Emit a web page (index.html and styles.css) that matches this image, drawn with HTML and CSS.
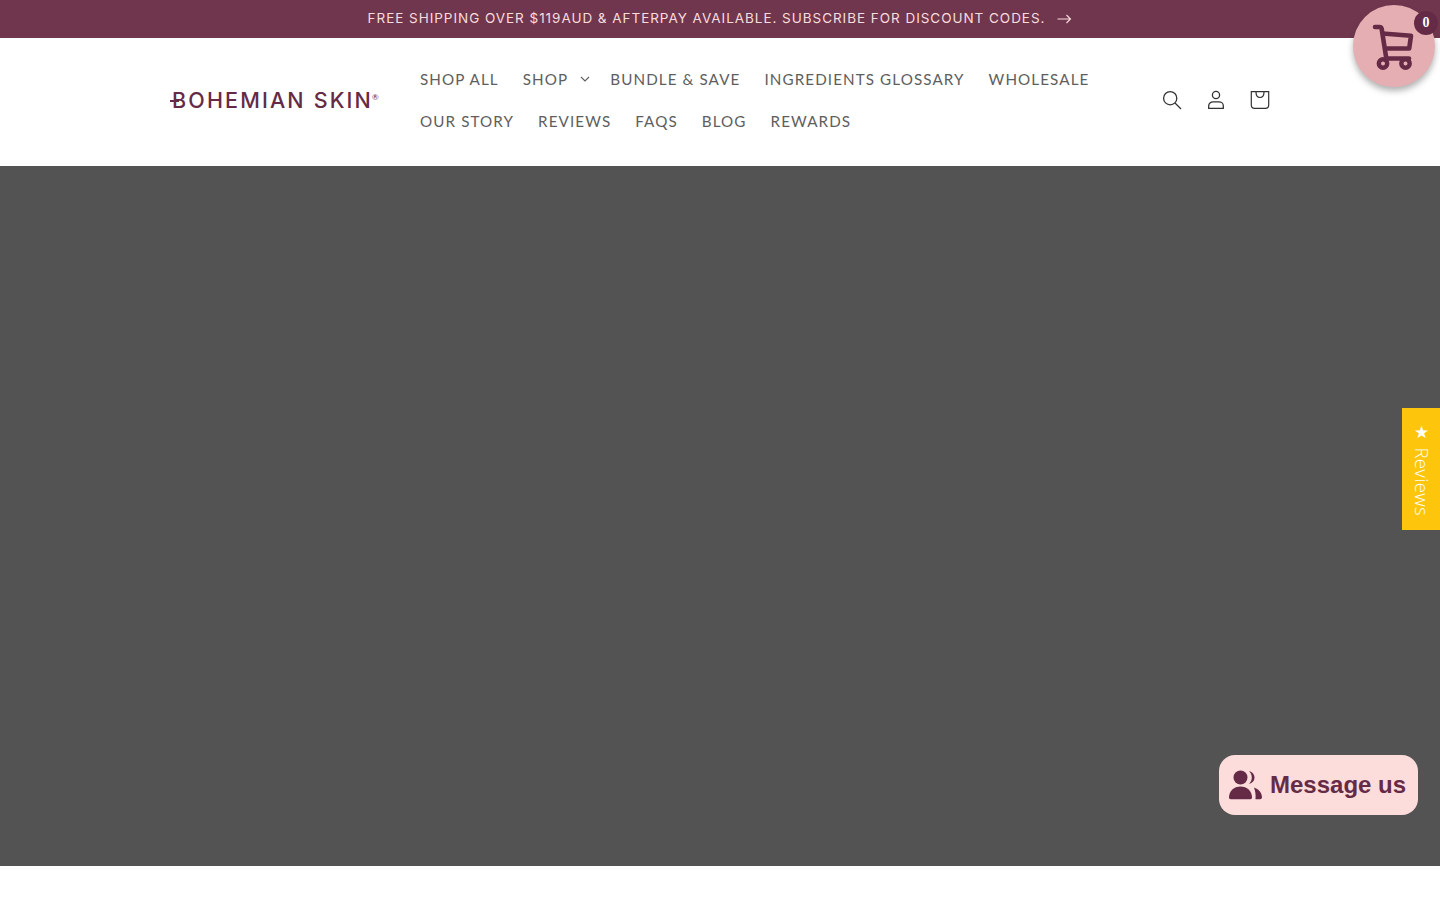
FILE: index.html
```html
<!DOCTYPE html>
<html lang="en">
<head>
<meta charset="utf-8">
<title>Bohemian Skin</title>
<link rel="stylesheet" href="styles.css">
</head>
<body>
<div class="announce">
  <a class="announce-link" href="#"><span>FREE SHIPPING OVER $119AUD &amp; AFTERPAY AVAILABLE. SUBSCRIBE FOR DISCOUNT CODES.</span>
  <svg class="arrow" viewBox="0 0 14 10" width="15" height="10"><path d="M0 5h13M9 1l4 4-4 4" fill="none" stroke="currentColor" stroke-width="1.1"/></svg></a>
</div>
<header class="header">
  <a class="logo" href="#"><span class="logo-text">BOHEMIAN SKIN</span><sup class="logo-reg">®</sup></a>
  <nav class="nav">
    <a href="#">SHOP ALL</a>
    <a href="#" class="has-caret">SHOP<svg class="caret" viewBox="0 0 10 6" width="10" height="6"><path d="M1 1l4 4 4-4" fill="none" stroke="currentColor" stroke-width="1.1"/></svg></a>
    <a href="#">BUNDLE &amp; SAVE</a>
    <a href="#">INGREDIENTS GLOSSARY</a>
    <a href="#">WHOLESALE</a>
    <span class="nav-break"></span>
    <a href="#">OUR STORY</a>
    <a href="#">REVIEWS</a>
    <a href="#">FAQS</a>
    <a href="#">BLOG</a>
    <a href="#">REWARDS</a>
  </nav>
  <div class="icons">
    <a class="icon" href="#" aria-label="Search"><svg viewBox="0 0 20 20" width="20" height="20"><circle cx="8.200" cy="8.200" r="6.600" fill="none" stroke="currentColor" stroke-width="1.300"/><path d="M13 13l6 6" stroke="currentColor" stroke-width="1.300"/></svg></a>
    <a class="icon" href="#" aria-label="Log in"><svg viewBox="0 0 20 20" width="20" height="20"><circle cx="10" cy="5" r="3.600" fill="none" stroke="currentColor" stroke-width="1.300"/><path d="M2.700 18.300v-2.600c0-2.300 2-3.900 4.300-3.900h6c2.300 0 4.300 1.600 4.300 3.900v2.600z" fill="none" stroke="currentColor" stroke-width="1.300"/></svg></a>
    <a class="icon" href="#" aria-label="Cart"><svg viewBox="0 0 20 20" width="20" height="20"><path d="M1.300 1.700h17.400v13.300c0 1.900-1.500 3.300-3.300 3.300H4.600c-1.800 0-3.300-1.400-3.300-3.300z" fill="none" stroke="currentColor" stroke-width="1.200"/><path d="M6 2c0 3.500 1.600 5.500 4 5.500s4-2 4-5.500" fill="none" stroke="currentColor" stroke-width="1.200"/></svg></a>
  </div>
</header>
<main class="hero"></main>
<div class="foot"></div>

<a class="float-cart" href="#" aria-label="Cart">
  <svg viewBox="0 0 42 46" width="42" height="46"><path d="M3 3h4.500c1.300 0 2 .8 2.200 2l4.300 27.500c.2 1.200 1 2 2.200 2h20.800" fill="none" stroke="#652b46" stroke-width="4.600" stroke-linecap="round" stroke-linejoin="round"/><path d="M10.500 9.500l28.500 2.200-1.800 12.800H12.500" fill="none" stroke="#652b46" stroke-width="4.600" stroke-linejoin="round"/><circle cx="11" cy="39.500" r="4.200" fill="none" stroke="#652b46" stroke-width="4.400"/><circle cx="33.500" cy="39.500" r="4.200" fill="none" stroke="#652b46" stroke-width="4.400"/></svg>
  <span class="float-badge">0</span>
</a>

<a class="reviews-tab" href="#"><span class="reviews-text"><span class="star">★</span> Reviews</span></a>

<a class="chat" href="#">
  <svg viewBox="0 0 34 30" width="34" height="30"><circle cx="11.500" cy="7.500" r="7" fill="#652b46"/><path d="M0 27.500C0 21 5 16.500 11.500 16.500S23 21 23 27.500c0 1-.7 1.700-1.700 1.700H1.700C.7 29.200 0 28.500 0 27.500z" fill="#652b46"/><path d="M20 1.200c3.500.6 5.500 3.300 5.500 6.300s-2 5.700-5.500 6.300c1.800-1.600 2.800-3.800 2.800-6.300S21.800 2.800 20 1.200zM25 17.500c4.500 1.500 8 5.300 8 9.800 0 1.100-.7 1.900-1.800 1.900h-4.700c.4-4.500-.2-8.300-1.500-11.700z" fill="#652b46"/></svg>
  <span>Message us</span>
</a>
</body>
</html>
```
FILE: styles.css
```css
* { box-sizing: border-box; }
html, body { margin: 0; padding: 0; }
body {
  height: 900px;
  overflow: hidden;
  background: #fff;
  font-family: "Lato", "Liberation Sans", sans-serif;
}
a { color: inherit; text-decoration: none; }

.announce {
  height: 38px;
  padding-bottom: 1px;
  background: #70364e;
  color: #f8dcdc;
  display: flex;
  align-items: center;
  justify-content: center;
}
.announce-link {
  display: flex;
  align-items: center;
  gap: 12px;
  font-family: "Inter", "Liberation Sans", sans-serif;
  font-size: 13.500px;
  letter-spacing: 0.960px;
  font-weight: 400;
  line-height: 1;
}
.arrow { flex: none; }

.header {
  height: 128px;
  padding: 20px 158px 24px 170px;
  display: flex;
  align-items: center;
  background: #fff;
}
.logo {
  width: 238px;
  flex: none;
  display: flex;
  align-items: flex-start;
  color: #652b46;
}
.logo-text {
  position: relative;
  padding-left: 2px;
  font-family: "Inter", "Liberation Sans", sans-serif;
  font-size: 21.500px;
  line-height: 24px;
  letter-spacing: 2.150px;
  font-weight: 500;
  white-space: nowrap;
}
.logo-text::before {
  content: "";
  position: absolute;
  left: 0;
  width: 9px;
  top: 12px;
  height: 1.500px;
  background: #652b46;
}
.logo-reg {
  font-size: 8px;
  line-height: 1;
  margin-top: 5px;
  margin-left: -1px;
}

.nav {
  flex: 1;
  display: flex;
  flex-wrap: wrap;
  align-items: center;
  color: #5e5e5e;
  font-size: 15.200px;
  letter-spacing: 1.100px;
}
.nav a {
  display: flex;
  align-items: center;
  height: 42px;
  padding: 0 12px;
  white-space: nowrap;
}
.nav .has-caret { padding-right: 8px; }
.caret { margin-left: 12px; }
.nav-break { flex-basis: 100%; height: 0; }

.icons { display: flex; flex: none; color: #333; }
.icon {
  width: 44px;
  height: 44px;
  display: flex;
  align-items: center;
  justify-content: center;
}

.hero { height: 700px; background: #535353; }
.foot { height: 34px; background: #fff; }

.float-cart {
  position: fixed;
  top: 5px;
  right: 5px;
  width: 82px;
  height: 82px;
  border-radius: 50%;
  background: #e5aeb2;
  box-shadow: 0 4px 6px rgba(60, 60, 60, 0.4);
  display: flex;
  align-items: center;
  justify-content: center;
  padding-right: 2px;
  padding-top: 1px;
}
.float-badge {
  position: absolute;
  top: 6px;
  right: -3px;
  width: 24px;
  height: 24px;
  border-radius: 50%;
  background: #652b46;
  color: #fff;
  font-family: "Liberation Serif", serif;
  font-weight: 700;
  font-size: 14px;
  line-height: 24px;
  text-align: center;
}

.reviews-tab {
  position: fixed;
  right: 0;
  top: 408px;
  width: 38px;
  height: 122px;
  background: #fdc50c;
  color: #fff;
  display: flex;
  align-items: center;
  justify-content: center;
  padding-left: 3px;
}
.reviews-text {
  writing-mode: vertical-rl;
  font-size: 18.600px;
  line-height: 35px;
  font-family: "Open Sans", "Liberation Sans", sans-serif;
  font-weight: 300;
  letter-spacing: 0.300px;
  white-space: nowrap;
}
.star { font-size: 17px; }

.chat {
  position: fixed;
  left: 1219px;
  top: 755px;
  width: 199px;
  height: 60px;
  border-radius: 16px;
  background: #fddcdc;
  color: #652b46;
  display: flex;
  align-items: center;
  gap: 7px;
  padding-left: 10px;
  font-family: "Liberation Sans", sans-serif;
  font-weight: 700;
  font-size: 24px;
}
```
